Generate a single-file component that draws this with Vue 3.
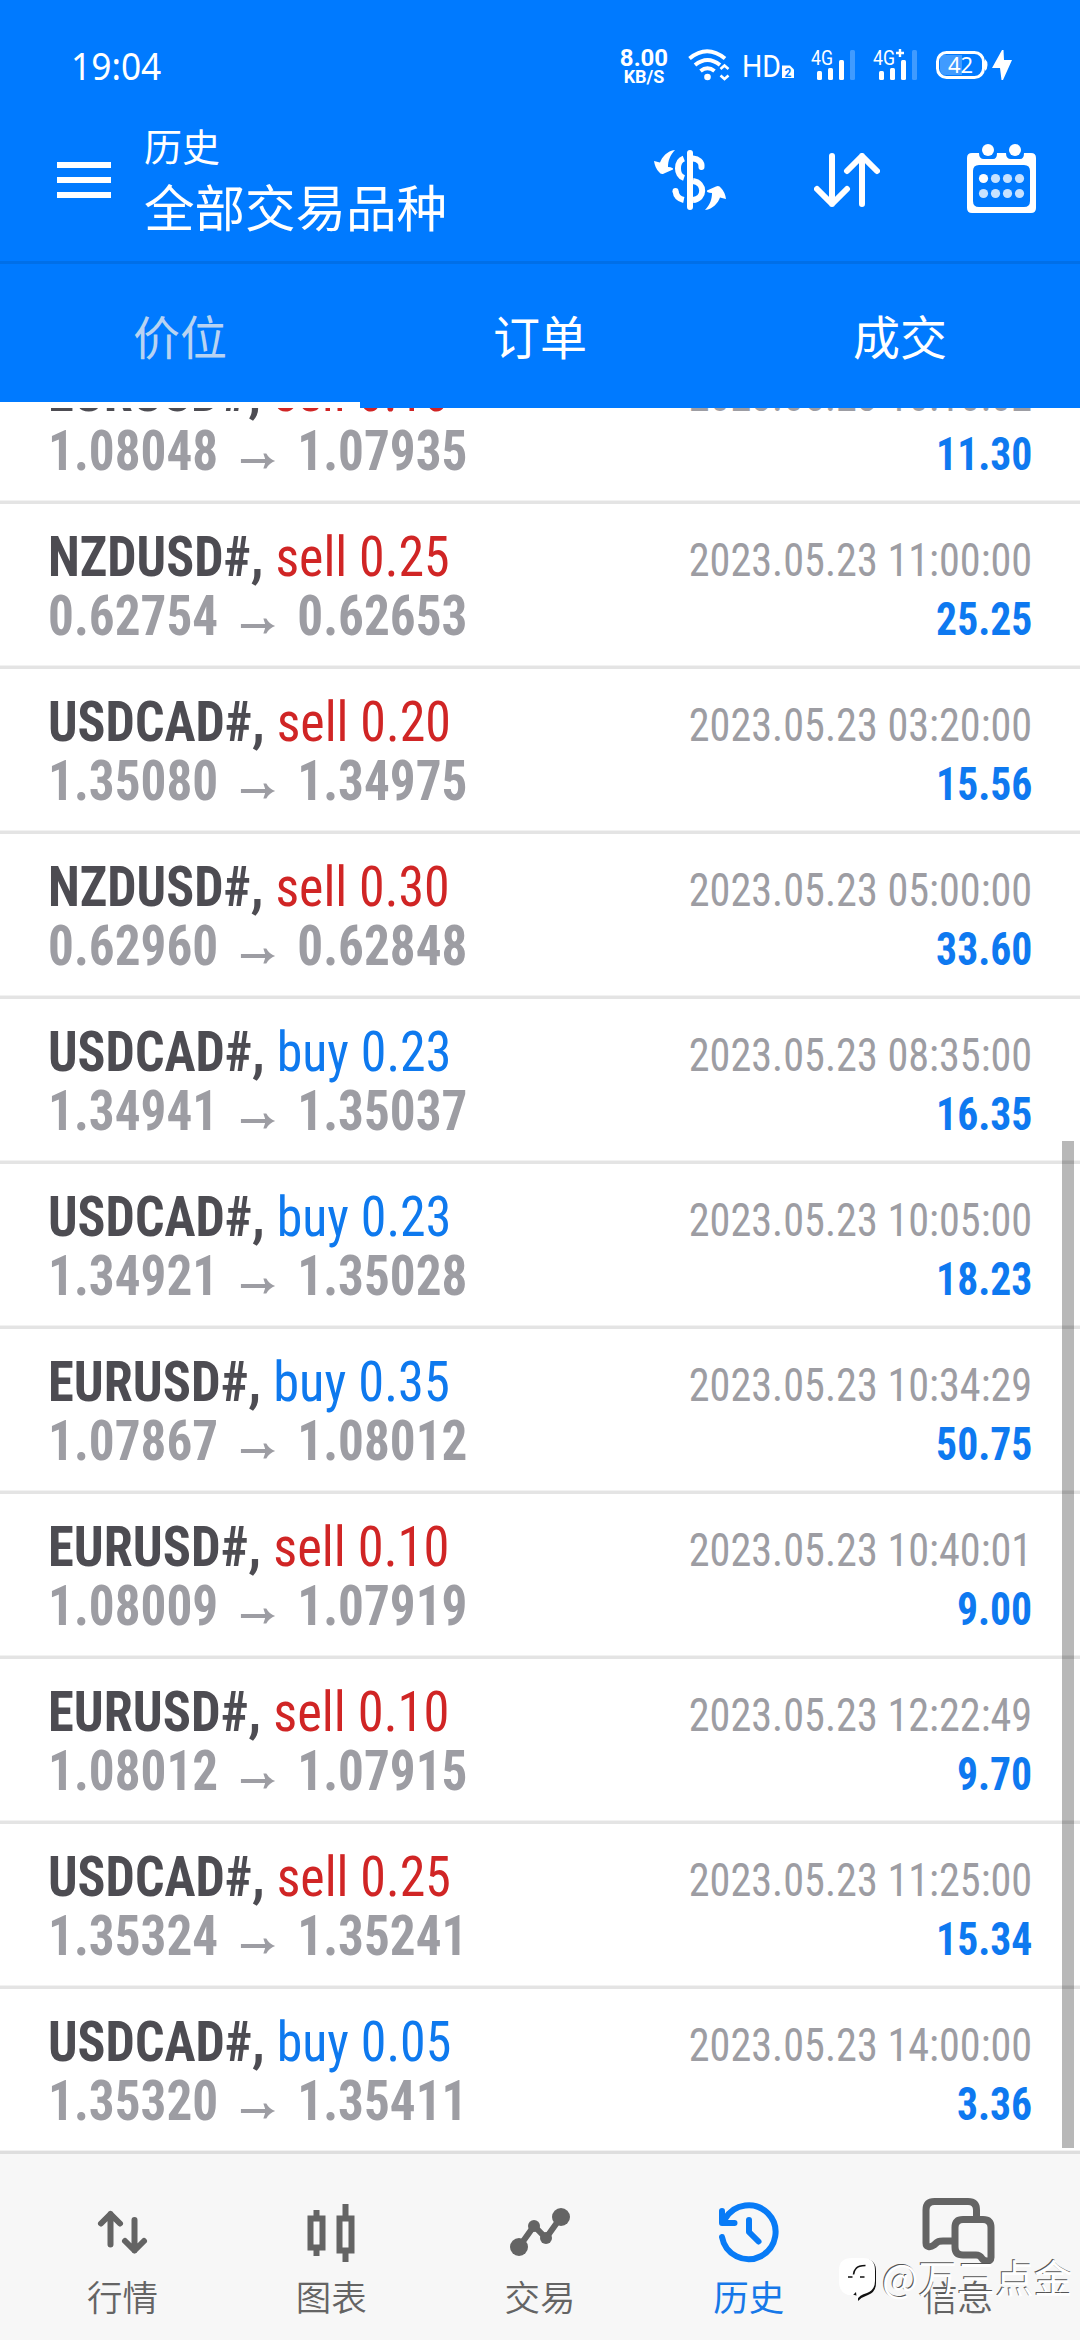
<script setup>
const trades = [
  { symbol: 'EURUSD#', side: 'sell', volume: '0.10', open: '1.08048', close: '1.07935', time: '2023.05.23 10:10:02', profit: '11.30' },
  { symbol: 'NZDUSD#', side: 'sell', volume: '0.25', open: '0.62754', close: '0.62653', time: '2023.05.23 11:00:00', profit: '25.25' },
  { symbol: 'USDCAD#', side: 'sell', volume: '0.20', open: '1.35080', close: '1.34975', time: '2023.05.23 03:20:00', profit: '15.56' },
  { symbol: 'NZDUSD#', side: 'sell', volume: '0.30', open: '0.62960', close: '0.62848', time: '2023.05.23 05:00:00', profit: '33.60' },
  { symbol: 'USDCAD#', side: 'buy', volume: '0.23', open: '1.34941', close: '1.35037', time: '2023.05.23 08:35:00', profit: '16.35' },
  { symbol: 'USDCAD#', side: 'buy', volume: '0.23', open: '1.34921', close: '1.35028', time: '2023.05.23 10:05:00', profit: '18.23' },
  { symbol: 'EURUSD#', side: 'buy', volume: '0.35', open: '1.07867', close: '1.08012', time: '2023.05.23 10:34:29', profit: '50.75' },
  { symbol: 'EURUSD#', side: 'sell', volume: '0.10', open: '1.08009', close: '1.07919', time: '2023.05.23 10:40:01', profit: '9.00' },
  { symbol: 'EURUSD#', side: 'sell', volume: '0.10', open: '1.08012', close: '1.07915', time: '2023.05.23 12:22:49', profit: '9.70' },
  { symbol: 'USDCAD#', side: 'sell', volume: '0.25', open: '1.35324', close: '1.35241', time: '2023.05.23 11:25:00', profit: '15.34' },
  { symbol: 'USDCAD#', side: 'buy', volume: '0.05', open: '1.35320', close: '1.35411', time: '2023.05.23 14:00:00', profit: '3.36' },
]
const dots = [0, 1, 2, 3, 4, 5, 6, 7]
</script>

<template>
  <div class="screen">
    <header class="top">
      <div class="status">
        <span class="clock">19:04</span>
        <div class="speed"><b>8.00</b><b class="unit">KB/S</b></div>
        <svg class="indicators" width="344" height="40" viewBox="0 0 344 40">
          <g fill="none" stroke="#fff" stroke-width="4">
            <path d="M1.5 13.500Q19 -1 37 13.500" />
            <path d="M7 20Q19.500 10 32 20" />
            <path d="M12.500 26Q19.500 20.500 26.500 26" />
            <path d="M32.500 24l4-3.500 4 3.500M32.500 30.500l4 3.500 4-3.500" stroke-width="2.600" />
          </g>
          <circle cx="19.500" cy="32" r="3.300" fill="#fff" />
          <text x="54" y="32" class="hd" textLength="39" lengthAdjust="spacingAndGlyphs">HD</text>
          <path d="M94 20.500h8l4 4V33H94z" fill="#fff" />
          <text x="96.500" y="31.500" class="sim">2</text>
          <text x="123" y="20" class="gen" textLength="22" lengthAdjust="spacingAndGlyphs">4G</text>
          <text x="185" y="20" class="gen" textLength="22" lengthAdjust="spacingAndGlyphs">4G</text>
          <path d="M208 8h8M212 4v8" stroke="#fff" stroke-width="2.400" />
          <g fill="#fff">
            <rect x="129" y="26" width="5" height="9" rx="1.500" />
            <rect x="140" y="23" width="5" height="12" rx="1.500" />
            <rect x="151" y="15" width="5" height="20" rx="1.500" />
            <rect x="162" y="5" width="5" height="30" rx="1.500" opacity=".25" />
            <rect x="191" y="26" width="5" height="9" rx="1.500" />
            <rect x="202" y="23" width="5" height="12" rx="1.500" />
            <rect x="213" y="15" width="5" height="20" rx="1.500" />
            <rect x="224" y="5" width="5" height="30" rx="1.500" opacity=".25" />
          </g>
          <rect x="249.500" y="7.500" width="46" height="25" rx="9" fill="none" stroke="#fff" stroke-width="3" />
          <path d="M252 10h22v20h-16q-6 0-6-6z" fill="#fff" opacity=".25" />
          <path d="M297 14q2.500 2 2.500 6t-2.500 6z" fill="#fff" />
          <text x="272.500" y="28" class="level" text-anchor="middle">42</text>
          <path d="M314 5L304 23h8l1.500 12h1.500L324 15h-8l-.5-10z" fill="#fff" />
        </svg>
      </div>
      <div class="titlebar">
        <svg class="menu" width="54" height="36" viewBox="0 0 54 36"><path d="M0 3h54M0 18h54M0 33h54" stroke="#fff" stroke-width="6" /></svg>
        <div class="titles">
          <span class="sub">历史</span>
          <span class="main">全部交易品种</span>
        </div>
        <svg class="currency" width="74" height="62" viewBox="0 0 74 62">
          <g fill="none" stroke="#fff" stroke-width="6">
            <path d="M29.800 9.500C22 12.500 22 26.500 30 29" />
            <path d="M39 9.500C44 10 48 13 47.500 18" stroke-linecap="round" />
            <path d="M39 32C51.500 34 51 50 39 51" />
            <path d="M21.500 42C22 47 25 50 29.800 51" />
            <path d="M21.500 42v.1M36 4v54" stroke-linecap="round" />
          </g>
          <path d="M21 1C13 2 8 8 6 13.500L0 12Q1 19 5 23Q7 26 10 24.500L19 20.500Q20 18.500 14 18C14 12 16 6 21 1z" fill="#fff" />
          <path d="M51 61C59 60 64 54 66 48.500L72 50Q71 43 67 39Q65 36 62 37.500L53 41.500Q52 43.500 58 44C58 50 56 56 51 61z" fill="#fff" />
        </svg>
        <svg class="sort" width="66" height="54" viewBox="0 0 66 54">
          <path d="M18 3v48M3 36l15 15 15-15M48 51V3M33 18L48 3l15 15" fill="none" stroke="#fff" stroke-width="6" stroke-linecap="round" stroke-linejoin="round" />
        </svg>
        <svg class="calendar" width="69" height="69" viewBox="0 0 69 69">
          <path fill-rule="evenodd" fill="#fff" d="M5 9H12Q12 15 17 15H26Q30 15 30 9H39Q39 15 44 15H53Q57 15 57 9H64Q69 9 69 14V64Q69 69 64 69H5Q0 69 0 64V14Q0 9 5 9zM12 21Q6 21 6 27V57Q6 63 12 63H57Q63 63 63 57V27Q63 21 57 21z" />
          <circle cx="21" cy="6" r="6" fill="#fff" /><circle cx="48" cy="6" r="6" fill="#fff" />
          <circle v-for="d in dots" :key="d" :cx="16.5 + (d % 4) * 12" :cy="d < 4 ? 34.500 : 49.500" r="4.600" fill="#fff" :opacity="d ? 0.78 : 1" />
        </svg>
      </div>
      <nav class="tabs">
        <span class="tab current">价位</span>
        <span class="tab">订单</span>
        <span class="tab">成交</span>
      </nav>
    </header>

    <main class="list">
      <section v-for="(t, i) in trades" :key="i" class="row">
        <div class="line">
          <div class="deal" :class="{ wide: t.symbol === 'EURUSD#' }"><b>{{ t.symbol }},</b>&nbsp;<span :class="t.side">{{ t.side }} {{ t.volume }}</span></div>
          <div class="time">{{ t.time }}</div>
        </div>
        <div class="line second">
          <div class="prices">
            <span>{{ t.open }}</span>
            <svg width="37" height="18" viewBox="0 0 35 18" preserveAspectRatio="none"><path d="M0 9h30" stroke="#9d9da3" stroke-width="4" /><path d="M23 1.500h3Q29 7 35 9Q29 11 26 16.500h-3l2.500-7.500z" fill="#9d9da3" /></svg>
            <span>{{ t.close }}</span>
          </div>
          <div class="profit">{{ t.profit }}</div>
        </div>
      </section>
      <i class="scrollbar"></i>
    </main>

    <footer class="nav">
      <div class="item">
        <svg width="76" height="72" viewBox="84 2196 76 72"><path d="M110.500 2244.500v-30.500M101 2223.500l9.500-9.500 9.500 9.500M134.500 2220v30.500M125 2241l9.500 9.500 9.500-9.500" fill="none" stroke="#646464" stroke-width="6" stroke-linecap="round" stroke-linejoin="round" /></svg>
        <span>行情</span>
      </div>
      <div class="item">
        <svg width="76" height="72" viewBox="293 2196 76 72"><path d="M310.500 2218.500h12v29h-12zM339.500 2218.500h12v32h-12zM316.500 2210v6M316.500 2250v6M345.500 2204v12M345.500 2253v9" fill="none" stroke="#646464" stroke-width="6" /></svg>
        <span>图表</span>
      </div>
      <div class="item">
        <svg width="76" height="72" viewBox="502 2196 76 72"><path d="M519 2247l15-21 12 12 15-21" fill="none" stroke="#646464" stroke-width="6" /><g fill="#646464"><circle cx="519" cy="2247" r="9" /><circle cx="534" cy="2226" r="6" /><circle cx="546" cy="2238" r="6" /><circle cx="561" cy="2217" r="9" /></g></svg>
        <span>交易</span>
      </div>
      <div class="item active">
        <svg width="76" height="72" viewBox="711 2196 76 72"><g fill="none" stroke="#087bf6" stroke-width="6" stroke-linecap="round" stroke-linejoin="round"><path d="M722 2237A27 27 0 1 0 725 2219" /><path d="M722 2211v12h12.500M749 2220v12l9.500 9.500" /></g></svg>
        <span>历史</span>
      </div>
      <div class="item">
        <svg width="76" height="72" viewBox="919.500 2196 76 72"><g fill="none" stroke="#646464" stroke-width="7" stroke-linejoin="round"><path d="M976 2218v-8q0-8.500-8.500-8.500h-33.500q-8.500 0-8.500 8.500v33c0 4 4 5 8 2 4-4 5-4 9-4h10" /><path d="M962.500 2219.500h20q8 0 8 8v30c0 5-7 4-9 1-2-3-3-3.500-6-3.500h-13q-8 0-8-8v-19.500q0-8 8-8z" /></g></svg>
        <span>信息</span>
      </div>
      <div class="watermark">
        <svg width="38" height="44" viewBox="0 0 38 44">
          <path d="M14 1h11q12 0 12 12v12q0 9-8 12-6 2-10 6v-5L5 34Q1 30 1 25V13Q1 1 14 1z" fill="#111" />
          <path d="M13 0h11q12 0 12 12v11q0 9-8 12-8 2-10 7l-1-8-3 3H9Q0 34 0 24V12Q0 0 13 0z" fill="#fff" />
          <path d="M26.500 7.500q-7 0-9.500 3-2 2-2.500 6M9 19h4.500M21 19h4.500" fill="none" stroke="#111" stroke-width="1.600" />
        </svg>
        <span>@万三点金</span>
      </div>
    </footer>
  </div>
</template>

<style>
body { margin: 0; background: #fff; }
</style>

<style scoped>
.screen { width: 1080px; height: 2340px; overflow: hidden; display: flex; flex-direction: column; background: #fff; font-family: "Roboto", "Noto Sans CJK SC", sans-serif; }
.top { height: 408px; flex: none; background: #007aff; color: #fff; display: flex; flex-direction: column; position: relative; z-index: 1; }
.status { height: 100px; display: flex; align-items: flex-start; box-sizing: border-box; padding: 45px 0 0 71px; flex: none; }
.clock { font: 38px/44px "Noto Sans", sans-serif; width: 549px; margin-top: -2px; transform: scaleX(.93); transform-origin: left; }
.speed { display: flex; flex-direction: column; align-items: center; width: 48px; margin-right: 20px; font-family: "Roboto", sans-serif; }
.speed b { font-size: 24px; line-height: 22px; margin-top: 2px; }
.speed .unit { font-size: 18px; line-height: 18px; margin: -1px 0 0; }
.hd { font: 32px "Roboto", sans-serif; fill: #fff; }
.sim { font: bold 12px "Roboto", sans-serif; fill: #007aff; }
.gen { font: 20px "Roboto", sans-serif; fill: #fff; }
.level { font: 22px "Noto Sans", sans-serif; fill: #fff; }
.titlebar { height: 161px; display: flex; align-items: flex-start; border-bottom: 3px solid #006fe8; flex: none; }
.menu { margin: 62px 0 0 57px; }
.titles { display: flex; flex-direction: column; width: 509px; margin-left: 33px; padding-top: 18px; font-family: "Noto Sans CJK SC", sans-serif; }
.sub { font-size: 38px; line-height: 54px; }
.main { font-size: 50.500px; line-height: 67px; }
.currency { margin: 49px 0 0 1px; }
.sort { margin: 53px 0 0 86px; }
.calendar { margin: 44px 0 0 87px; }
.tabs { flex: 1; display: flex; }
.tab { flex: 1; text-align: center; font: 47px/141px "Noto Sans CJK SC", sans-serif; height: 144px; box-sizing: border-box; }
.current { color: #b8d3f2; border-bottom: 6px solid #fff; }
.list { height: 1746px; display: flex; flex-direction: column; justify-content: flex-end; position: relative; flex: none; }
.row { height: 165px; flex: none; box-sizing: border-box; border-bottom: 3px solid #e4e4e4; box-shadow: inset 0 -1px #f2f2f2; padding: 24px 48px 0; font-family: "Roboto Condensed", "Roboto", sans-serif; font-stretch: condensed; }
.row:nth-of-type(11) { border-color: #dedede; }
.line { display: flex; justify-content: space-between; align-items: baseline; height: 59px; line-height: 59px; white-space: nowrap; }
.deal { font-size: 55px; color: #4d4c52; transform: scaleX(.943); transform-origin: left; }
.wide { transform: scaleX(.954); }
.sell { color: #d02525; }
.buy { color: #0e79ee; }
.time { font-size: 46px; color: #9d9da3; transform: scaleX(.918); transform-origin: right; }
.prices { font-size: 55px; font-weight: bold; color: #9d9da3; display: flex; align-items: baseline; gap: 24px; transform: scaleX(.931); transform-origin: left; }
.profit { font-size: 46px; font-weight: bold; color: #0e79f0; transform: scaleX(.905); transform-origin: right; }
.scrollbar { position: absolute; right: 6px; top: 733px; width: 12px; height: 1007px; background: rgba(0, 0, 0, .28); }
.nav { height: 186px; flex: none; background: #f7f7f7; display: flex; padding: 42px 18px 0; box-sizing: border-box; position: relative; }
.item { flex: 1; display: flex; flex-direction: column; align-items: center; color: #646464; font: 35.500px/44px "Noto Sans CJK SC", sans-serif; }
.item span { margin-top: 6px; font-weight: 350; }
.active span { color: #1678e8; font-weight: 400; }
.watermark { position: absolute; left: 839px; top: 104px; display: flex; align-items: center; gap: 5px; }
.watermark span { font: 38.500px/44px "Noto Sans CJK SC", sans-serif; color: #fff; text-shadow: -1px -1px 0 #555; margin-top: -8px; white-space: nowrap; }
</style>
